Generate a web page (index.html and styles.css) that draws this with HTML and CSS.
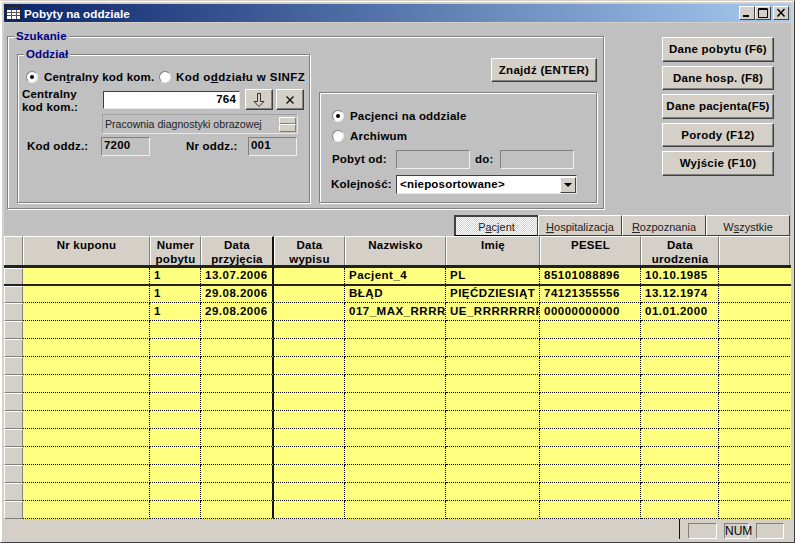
FILE: index.html
```html
<!DOCTYPE html>
<html lang="pl">
<head>
<meta charset="utf-8">
<title>Pobyty na oddziale</title>
<link rel="stylesheet" href="styles.css">
</head>
<body>
<div class="window">
  <div class="titlebar">
    <svg class="appicon" width="15" height="14" viewBox="0 0 15 14"><rect x=".5" y=".5" width="14" height="13" fill="#fff" stroke="#222"/><rect x="1" y="1" width="13" height="3" fill="#1a2a7a"/><path d="M1 6.500h13M1 9.500h13M5.500 4v9M10.500 4v9" stroke="#555"/></svg>
    <span class="titletext">Pobyty na oddziale</span>
    <div class="winbtns">
      <span class="winbtn"><svg width="14" height="12" viewBox="0 0 14 12"><rect x="3" y="8" width="6" height="2" fill="#000"/></svg></span>
      <span class="winbtn"><svg width="14" height="12" viewBox="0 0 14 12"><path d="M2.500 1.500h9v9h-9zM2.500 2.500h9" fill="none" stroke="#000"/></svg></span>
      <span class="winbtn winclose"><svg width="14" height="12" viewBox="0 0 14 12"><path d="M3.500 2l7 7.500M10.500 2l-7 7.500" fill="none" stroke="#000" stroke-width="1.500"/></svg></span>
    </div>
  </div>
  <div class="client">
    <div class="top">
      <div class="group szukanie">
        <span class="legend">Szukanie</span>
        <div class="group oddzial">
          <span class="legend">Oddział</span>
          <div class="radios">
            <span class="radio on"></span><span class="lbl l1">Cen<u>t</u>ralny kod kom.</span>
            <span class="radio"></span><span class="lbl l2">Kod o<u>d</u>działu w SINFZ</span>
          </div>
          <div class="coderow">
            <span class="lbl codelbl">Centralny<br>kod kom.:</span>
            <span class="field white codefield">764</span>
            <span class="btn small"><svg width="16" height="16" viewBox="0 0 16 16"><path d="M6.500 1.500h3v8h3.500l-5 5-5-5h3.500z" fill="none" stroke="#333"/></svg></span>
            <span class="btn small x"><svg width="10" height="10" viewBox="0 0 10 10"><path d="M1.500 1.500l7 7M8.500 1.500l-7 7" fill="none" stroke="#111" stroke-width="1.400"/></svg></span>
          </div>
          <div class="namerow">
            <span class="nametext">Pracownia diagnostyki obrazowej</span>
            <span class="spin"><i></i><i></i></span>
          </div>
          <div class="kodrow">
            <span class="lbl kl1">Kod oddz.:</span>
            <span class="field kodbox">7200</span>
            <span class="lbl kl2">Nr oddz.:</span>
            <span class="field kodbox">001</span>
          </div>
        </div>
        <div class="rightcol">
          <span class="btn find">Znajdź (ENTER)</span>
          <div class="group patients">
            <div class="pradio"><span class="radio on"></span><span class="lbl">Pacjenci na oddziale</span></div>
            <div class="pradio p2"><span class="radio"></span><span class="lbl">Archiwum</span></div>
            <div class="daterow">
              <span class="lbl pl">Pobyt od:</span>
              <span class="field datebox"></span>
              <span class="lbl dol">do:</span>
              <span class="field datebox"></span>
            </div>
            <div class="sortrow">
              <span class="lbl sl">Kolejność:</span>
              <span class="field white combo"><span class="combotext">&lt;nieposortowane&gt;</span><span class="arrow"></span></span>
            </div>
          </div>
        </div>
      </div>
      <div class="actions">
        <span class="btn act">Dane pobytu (F6)</span>
        <span class="btn act">Dane hosp. (F8)</span>
        <span class="btn act">Dane pacjenta(F5)</span>
        <span class="btn act">Porody (F12)</span>
        <span class="btn act">Wyjście (F10)</span>
      </div>
    </div>
    <div class="tabs">
      <span class="tab active">P<u>a</u>cjent</span>
      <span class="tab"><u>H</u>ospitalizacja</span>
      <span class="tab"><u>R</u>ozpoznania</span>
      <span class="tab">W<u>s</u>zystkie</span>
    </div>
    <div class="grid">
      <div class="row head">
        <span></span><span>Nr kuponu</span><span>Numer<br>pobytu</span><span>Data<br>przyjęcia</span><span>Data<br>wypisu</span><span>Nazwisko</span><span>Imię</span><span>PESEL</span><span>Data<br>urodzenia</span><span></span>
      </div>
      <div class="row frozen">
        <span></span><span></span><span>1</span><span>13.07.2006</span><span></span><span>Pacjent_4</span><span>PL</span><span>85101088896</span><span>10.10.1985</span><span></span>
      </div>
      <div class="row">
        <span></span><span></span><span>1</span><span>29.08.2006</span><span></span><span>BŁĄD</span><span>PIĘĆDZIESIĄT</span><span>74121355556</span><span>13.12.1974</span><span></span>
      </div>
      <div class="row">
        <span></span><span></span><span>1</span><span>29.08.2006</span><span></span><span>017_MAX_RRRR</span><span>UE_RRRRRRRR</span><span>00000000000</span><span>01.01.2000</span><span></span>
      </div>
      <div class="row"><span></span><span></span><span></span><span></span><span></span><span></span><span></span><span></span><span></span><span></span></div>
      <div class="row"><span></span><span></span><span></span><span></span><span></span><span></span><span></span><span></span><span></span><span></span></div>
      <div class="row"><span></span><span></span><span></span><span></span><span></span><span></span><span></span><span></span><span></span><span></span></div>
      <div class="row"><span></span><span></span><span></span><span></span><span></span><span></span><span></span><span></span><span></span><span></span></div>
      <div class="row"><span></span><span></span><span></span><span></span><span></span><span></span><span></span><span></span><span></span><span></span></div>
      <div class="row"><span></span><span></span><span></span><span></span><span></span><span></span><span></span><span></span><span></span><span></span></div>
      <div class="row"><span></span><span></span><span></span><span></span><span></span><span></span><span></span><span></span><span></span><span></span></div>
      <div class="row"><span></span><span></span><span></span><span></span><span></span><span></span><span></span><span></span><span></span><span></span></div>
      <div class="row"><span></span><span></span><span></span><span></span><span></span><span></span><span></span><span></span><span></span><span></span></div>
      <div class="row"><span></span><span></span><span></span><span></span><span></span><span></span><span></span><span></span><span></span><span></span></div>
      <div class="row"><span></span><span></span><span></span><span></span><span></span><span></span><span></span><span></span><span></span><span></span></div>
    </div>
    <div class="status">
      <span class="sdiv"></span>
      <span class="sbox s1"></span>
      <span class="sbox s2">NUM</span>
      <span class="sbox s3"></span>
    </div>
  </div>
</div>
</body>
</html>
```
FILE: styles.css
```css
* { box-sizing: border-box; }
html, body { margin: 0; padding: 0; }
body { width: 795px; height: 543px; overflow: hidden; background: #d4d0c8; font-family: "Liberation Sans", Arial, sans-serif; font-size: 12px; color: #000; }
.window { width: 795px; height: 543px; padding: 3px 3px 2px 3px; display: flex; flex-direction: column; background: #d4d0c8; border: 1px solid; border-color: #d4d0c8 #404040 #404040 #fff; box-shadow: inset 1px 1px 0 #fff; }
.titlebar { height: 18px; flex: none; display: flex; align-items: center; padding-left: 2px; background: linear-gradient(90deg, #0a246a, #a6caf0); }
.appicon { flex: none; }
.titletext { margin-left: 3px; color: #fff; font-weight: 700; font-size: 11.700px; }
.winbtns { margin-left: auto; margin-right: 2px; display: flex; }
.winbtn { width: 16px; height: 14px; background: #d4d0c8; border: 1px solid; border-color: #fff #404040 #404040 #fff; display: flex; align-items: center; justify-content: center; }
.winclose { margin-left: 2px; }
.client { flex: 1; margin-top: 1px; display: flex; flex-direction: column; background: #c0c0c0; min-height: 0; }
.top { height: 192px; flex: none; display: flex; padding: 13px 0 0 3px; }
.group { position: relative; border: 1px solid #808080; box-shadow: 1px 1px 0 #fff, inset 1px 1px 0 #fff; }
.legend { position: absolute; top: -8px; left: 6px; padding: 0 2px; background: #c0c0c0; color: #000080; font-weight: 700; font-size: 11.500px; line-height: 14px; letter-spacing: .1px; }
.szukanie { width: 597px; height: 173px; display: flex; padding: 17px 0 0 9px; }
.oddzial { width: 293px; height: 149px; flex: none; padding: 15px 0 0 3px; }
.lbl { font-weight: 700; font-size: 11.500px; letter-spacing: .2px; line-height: 13px; white-space: nowrap; }
.radios { display: flex; align-items: center; height: 14px; padding-left: 5px; }
.radio { position: relative; flex: none; width: 12px; height: 12px; border-radius: 50%; background: #fff; border: 1px solid; border-color: #808080 #e8e8e8 #e8e8e8 #808080; }
.radio.on::after { content: ""; position: absolute; left: 3px; top: 3px; width: 4px; height: 4px; border-radius: 50%; background: #000; }
.radios .lbl { margin-left: 6px; }
.radios .l1 { width: 115px; }
.radios .l2 { margin-left: 5px; letter-spacing: .42px; }
.coderow { display: flex; align-items: flex-start; margin-top: 3px; height: 27px; padding-left: 1px; }
.codelbl { width: 81px; display: block; margin-top: 1px; }
.field { display: block; flex: none; background: #c0c0c0; border: 1px solid; border-color: #808080 #f0f0f0 #f0f0f0 #808080; font-weight: 700; font-size: 11.500px; letter-spacing: .2px; line-height: 15px; }
.white { background: #fff; border-color: #404040 #e8e8e8 #e8e8e8 #404040; }
.codefield { width: 137px; height: 18px; margin-top: 4px; text-align: right; padding-right: 3px; }
.btn { display: flex; align-items: center; justify-content: center; flex: none; background: #d4d0c8; border: 1px solid; border-color: #fff #404040 #404040 #fff; box-shadow: inset -1px -1px 0 #808080; font-weight: 700; font-size: 11.500px; letter-spacing: .3px; white-space: nowrap; }
.small { width: 28px; height: 21px; margin: 2px 0 0 5px; }
.small.x { margin-left: 3px; }
.namerow { display: flex; align-items: center; justify-content: space-between; width: 196px; height: 20px; margin: 0 0 0 81px; padding: 0 1px 0 2px; border: 1px solid; border-color: #a0a0a0 #e8e8e8 #e8e8e8 #a0a0a0; }
.nametext { font-size: 10.600px; color: #222; white-space: nowrap; }
.spin { display: flex; flex-direction: column; width: 17px; height: 15px; }
.spin i { flex: 1; background: #d4d0c8; border: 1px solid; border-color: #fff #808080 #808080 #fff; }
.kodrow { display: flex; align-items: center; margin-top: 3px; height: 19px; }
.kodbox { width: 49px; height: 19px; padding-left: 2px; }
.kl1 { margin-left: 6px; width: 74px; }
.kl2 { margin-left: 36px; width: 62px; }
.rightcol { width: 278px; margin-left: 9px; display: flex; flex-direction: column; align-items: flex-end; flex: none; }
.find { width: 106px; height: 24px; margin-top: 4px; }
.patients { width: 278px; height: 111px; margin-top: 10px; padding: 13px 0 0 12px; flex: none; }
.pradio { display: flex; align-items: center; height: 20px; }
.pradio .lbl { margin-left: 6px; }
.daterow { display: flex; align-items: center; margin-top: 4px; height: 19px; }
.pl { width: 64px; }
.datebox { width: 74px; height: 19px; }
.dol { width: 25px; margin-left: 5px; }
.sortrow { display: flex; align-items: center; height: 19px; margin-top: 6px; margin-left: -1px; }
.sl { width: 65px; }
.combo { width: 181px; height: 19px; display: flex; align-items: center; justify-content: space-between; padding-left: 3px; }
.combotext { line-height: 15px; }
.arrow { position: relative; width: 16px; height: 16px; background: #d4d0c8; border: 1px solid; border-color: #fff #404040 #404040 #fff; }
.arrow::after { content: ""; position: absolute; left: 3px; top: 5px; border: 4px solid transparent; border-top: 4px solid #000; border-bottom: 0; }
.actions { display: flex; flex-direction: column; gap: 4px; margin-left: 58px; margin-top: 1px; flex: none; }
.btn.act { width: 112px; height: 24.500px; letter-spacing: .25px; }
.tabs { flex: none; height: 21px; display: flex; padding-left: 450px; }
.tab { width: 84px; height: 21px; background: #d4d0c8; border: 1px solid; border-color: #fff #404040 #404040 #fff; display: flex; align-items: center; justify-content: center; padding-top: 2px; font-size: 11px; color: #222; }
.tab.active { background: repeating-conic-gradient(#fff 0 25%, #d4d0c8 0 50%) 0 0 / 2px 2px; border-color: #404040 #404040 #000 #404040; border-width: 2px 1px 1px 2px; }
.grid { flex: none; height: 283px; display: flex; flex-direction: column; }
.row { flex: none; height: 18px; display: grid; grid-template-columns: 19px 127px 51px 73px 71px 101px 94px 101px 78px 71px; background: #ffff80; font-weight: 700; font-size: 11.500px; letter-spacing: .5px; line-height: 15px; }
.row > span { display: block; overflow: hidden; white-space: nowrap; padding: 1px 0 0 4px; border-right: 1px dotted #000; border-bottom: 1px dotted #000; }
.row > span:first-child { background: #d4d0c8; border: 1px solid; border-color: #fff #808080 #808080 #fff; padding: 0; }
.row > span:nth-child(4) { border-right: 2px solid #111; }
.row > span:last-child { border-right: 0; }
.row.head { height: 32px; background: #d4d0c8; line-height: 14px; letter-spacing: .25px; border-bottom: 3px solid #222; }
.row.head > span { border: 0; border-right: 1px solid #808080; border-top: 1px solid #fff; border-left: 1px solid #fff; text-align: center; padding: 1px 0 0; }
.row.head > span:nth-child(4) { border-right: 2px solid #111; }
.row.frozen { height: 18px; border-bottom: 2px solid #222; }
.row.frozen > span { padding-top: 0; border-bottom: 0; }
.row.frozen + .row { height: 17px; }
.row.frozen + .row > span { padding-top: 0; }
.status { flex: 1; background: #d4d0c8; display: flex; align-items: flex-end; padding: 0 7px 2px 675px; }
.sdiv { width: 1px; height: 20px; background: #111; }
.sbox { height: 16px; border: 1px solid; border-color: #808080 #fff #fff #808080; font-size: 12px; line-height: 14px; text-align: center; }
.s1 { width: 29px; margin-left: 8px; }
.s2 { width: 25px; margin-left: 7px; }
.s3 { width: 28px; margin-left: 7px; }
```
